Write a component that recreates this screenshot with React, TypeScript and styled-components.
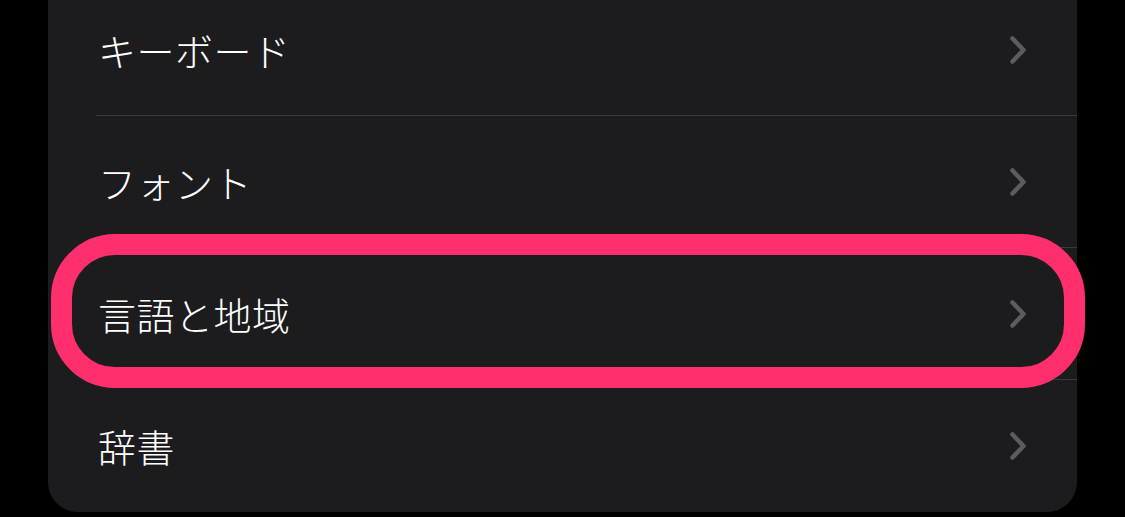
import styled, { createGlobalStyle } from "styled-components";

const GlobalStyle = createGlobalStyle`
  html, body {
    margin: 0;
    padding: 0;
    background: #000;
    overflow: hidden;
  }
  body {
    font-family: "Noto Sans CJK JP", "Noto Sans", sans-serif;
  }
`;

const Screen = styled.div`
  width: 1125px;
  height: 517px;
  background: #000;
  overflow: hidden;
`;

const Panel = styled.div`
  margin: -16px 0 0 48px;
  width: 1029px;
  background: #1c1c1e;
  border-radius: 0 0 30px 30px;
  display: flex;
  flex-direction: column;
`;

const Row = styled.div<{ last?: boolean }>`
  position: relative;
  height: 132px;
  box-sizing: border-box;
  display: flex;
  align-items: center;
  padding: 0 50px 0 50px;
  &::after {
    content: "";
    display: ${(props) => (props.last ? "none" : "block")};
    position: absolute;
    left: 48px;
    right: 0;
    bottom: 0;
    height: 1px;
    background: #3a3a3d;
  }
`;

const Label = styled.span`
  flex: 1;
  color: #fff;
  font-size: 38px;
  font-weight: 300;
  line-height: 1;
  letter-spacing: 0.5px;
`;

const Chevron = styled.svg`
  width: 18px;
  height: 30px;
  flex-shrink: 0;
`;

const Highlight = styled.div`
  position: absolute;
  left: 3px;
  right: -8px;
  top: -14px;
  bottom: -8px;
  box-sizing: border-box;
  border: 21px solid #ff2e6d;
  border-radius: 64px;
  z-index: 2;
  pointer-events: none;
`;

const items = ["キーボード", "フォント", "言語と地域", "辞書"];

function App() {
  return (
    <Screen>
      <GlobalStyle />
      <Panel>
        {items.map((item, i) => (
          <Row key={item} last={i === items.length - 1}>
            <Label>{item}</Label>
            <Chevron viewBox="0 0 18 30">
              <polyline
                points="3.5,3.5 14.5,15 3.5,26.5"
                fill="none"
                stroke="#5b5b60"
                strokeWidth="4.5"
                strokeLinecap="round"
                strokeLinejoin="round"
              />
            </Chevron>
            {item === "言語と地域" && <Highlight />}
          </Row>
        ))}
      </Panel>
    </Screen>
  );
}

export default App;
